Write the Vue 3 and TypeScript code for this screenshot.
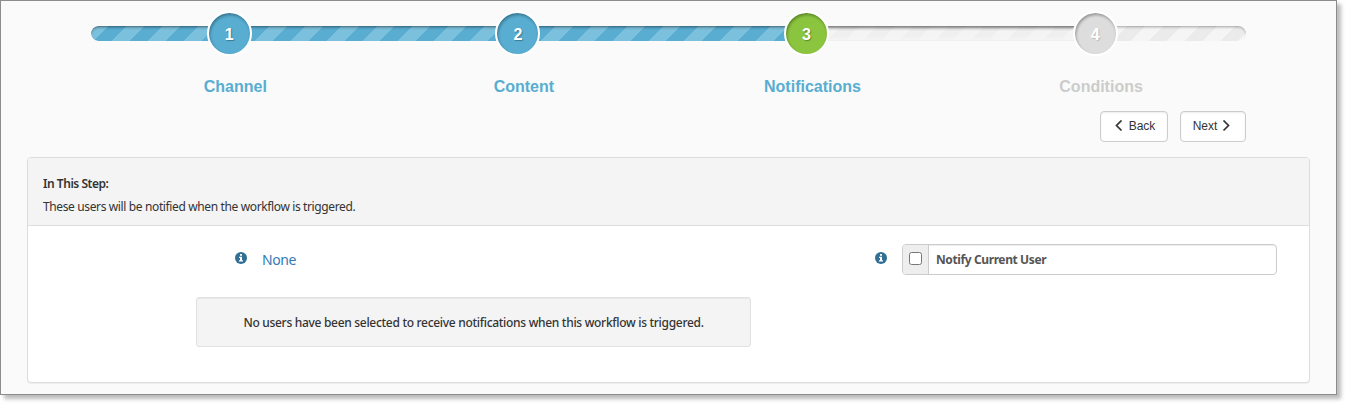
<script setup lang="ts">
interface Step { label: string; state: 'done' | 'current' | 'todo' }
const steps: Step[] = [
  { label: 'Channel', state: 'done' },
  { label: 'Content', state: 'done' },
  { label: 'Notifications', state: 'current' },
  { label: 'Conditions', state: 'todo' },
]
</script>

<template>
  <main class="window">
    <section class="wizard">
      <div class="track"><div class="progress"></div><div class="upcoming"></div><div class="rest"></div></div>
      <ol class="steps">
        <li v-for="(step, i) in steps" :key="step.label" :class="['step', step.state]">
          <span class="dot">{{ i + 1 }}</span>
          <span class="label">{{ step.label }}</span>
        </li>
      </ol>
    </section>
    <nav class="actions">
      <button class="btn back" type="button">
        <svg width="9" height="12" viewBox="0 0 9 12"><path d="M7.500 .5 2.500 5.500l5 5" /></svg><span>Back</span>
      </button>
      <button class="btn next" type="button">
        <span>Next</span><svg width="9" height="12" viewBox="0 0 9 12"><path d="M1.500 .5 6.500 5.500l-5 5" /></svg>
      </button>
    </nav>
    <section class="panel">
      <header class="heading">
        <strong>In This Step:</strong>
        <p>These users will be notified when the workflow is triggered.</p>
      </header>
      <div class="body">
        <div class="recipients">
          <div class="selection">
            <svg class="info" width="12" height="12" viewBox="0 0 12 12"><circle cx="6" cy="6" r="6" /><path d="M5 2h2v1.700H5zM4 4.700h3v3.500h1v1.300H4V8.200h1V6H4z" /></svg>
            <a>None</a>
          </div>
          <div class="well"><span>No users have been selected to receive notifications when this workflow is triggered.</span></div>
        </div>
        <svg class="info right" width="12" height="12" viewBox="0 0 12 12"><circle cx="6" cy="6" r="6" /><path d="M5 2h2v1.700H5zM4 4.700h3v3.500h1v1.300H4V8.200h1V6H4z" /></svg>
        <label class="group">
          <span class="addon"><input type="checkbox"></span>
          <span class="field"><span>Notify Current User</span></span>
        </label>
      </div>
    </section>
  </main>
</template>

<style>
html, body { margin: 0; min-height: 405px; background: #fff; }
body { overflow: hidden; }
</style>

<style scoped>
* { box-sizing: border-box; }
.window { width: 1337px; height: 395px; border: 1px solid #8c8c8c; background: #fafafa; box-shadow: 4px 4px 4px rgba(0,0,0,.27); font-family: "Noto Sans", "Open Sans", sans-serif; font-size: 12px; color: #333; }
.wizard { display: grid; width: 1155px; height: 109px; margin-left: 90px; }
.track, .steps { grid-area: 1 / 1; }
.track { display: flex; height: 15px; margin-top: 25px; border-radius: 8px; overflow: hidden; background: repeating-linear-gradient(135deg, #ebebeb 0 12.640px, #f5f5f5 12.640px 25.280px); }
.progress { width: 716px; background: repeating-linear-gradient(135deg, #7bc0dc 0 12.640px, #58add1 12.640px 25.280px); box-shadow: inset 0 2px 3px -1px rgba(0,0,0,.5); border-radius: 8px 0 0 8px; }
.upcoming { width: 289px; background: rgba(245,245,245,.45); box-shadow: inset 0 2px 3px rgba(0,0,0,.5), inset 0 -3px 3px #f5f5f5; }
.rest { flex: 1; box-shadow: inset 0 2px 3px -1px rgba(0,0,0,.35); border-radius: 0 8px 8px 0; }
.steps { display: grid; grid-template-columns: repeat(4, 288.600px); list-style: none; margin: 10px 0 0; padding: 0; }
.step { display: flex; flex-direction: column; align-items: center; font-family: "Liberation Sans", Arial, sans-serif; font-weight: 700; font-size: 16px; color: #58add1; }
.dot { width: 45px; height: 45px; padding-top: 3px; margin-right: 12px; border: 2px solid #fff; border-radius: 50%; background: #58add1; display: flex; align-items: center; justify-content: center; color: #fff; line-height: 18px; box-shadow: inset 1px 2px 3px rgba(0,0,0,.32); text-shadow: 1px 1px 1px rgba(0,0,0,.3); }
.label { margin-top: 22px; line-height: 18px; }
.current .dot { background: #8bc53f; }
.todo { color: #ccc; }
.todo .dot { background: #ddd; text-shadow: 1px 1px 1px rgba(0,0,0,.15); }
.actions { display: flex; justify-content: flex-end; gap: 12px; width: 1245px; height: 47px; align-items: flex-start; margin-top: 1px; }
.btn { display: flex; align-items: center; justify-content: center; gap: 5px; height: 31px; padding: 0 0 1px; border: 1px solid #ccc; border-radius: 4px; background: #fff; box-shadow: inset 0 1px 2px rgba(0,0,0,.08); font: 12px "Liberation Sans", Arial, sans-serif; color: #333; }
.back { width: 68px; gap: 6px; padding-left: 1px; }
.next { width: 66px; padding-right: 2px; }
.btn svg { fill: none; stroke: #333; stroke-width: 1.700; }
.panel { width: 1283px; height: 226px; margin: -1px 0 0 26px; border: 1px solid #ddd; border-radius: 4px; background: #fff; box-shadow: 0 1px 1px rgba(0,0,0,.05); }
.heading { height: 68px; padding: 17px 15px 0; background: #f4f4f4; border-bottom: 1px solid #ddd; border-radius: 3px 3px 0 0; }
.heading strong, .heading p { display: block; margin: 0 0 5px; line-height: 18px; font-weight: 600; letter-spacing: -.460px; }
.heading p { font-weight: 400; letter-spacing: -.370px; }
.body { display: flex; align-items: flex-start; padding-top: 18px; }
.recipients { width: 555px; margin-left: 168px; }
.selection { display: flex; height: 53px; padding-left: 39px; }
.info { flex: none; fill: #316f94; margin-top: 8px; }
.info path { fill: #fff; }
.selection a { margin: 6px 0 0 15px; font-size: 14px; line-height: 20px; letter-spacing: -.450px; color: #337ab7; }
.well { display: flex; align-items: center; justify-content: center; height: 50px; border: 1px solid #e1e1e1; border-radius: 3px; background: #f4f4f4; box-shadow: inset 0 1px 1px rgba(0,0,0,.05); font-weight: 500; letter-spacing: -.300px; white-space: nowrap; }
.right { margin-left: 124px; }
.group { display: flex; width: 375px; height: 31px; margin-left: 15px; border: 1px solid #ccc; border-radius: 4px; box-shadow: inset 0 1px 1px rgba(0,0,0,.075); }
.addon { width: 26px; background: #eee; border-right: 1px solid #ccc; border-radius: 3px 0 0 3px; }
.addon input { display: block; width: 13px; height: 13px; margin: 7px 0 0 6px; }
.field { padding-left: 7px; line-height: 29px; font-weight: 700; letter-spacing: -.390px; color: #555; }
</style>
